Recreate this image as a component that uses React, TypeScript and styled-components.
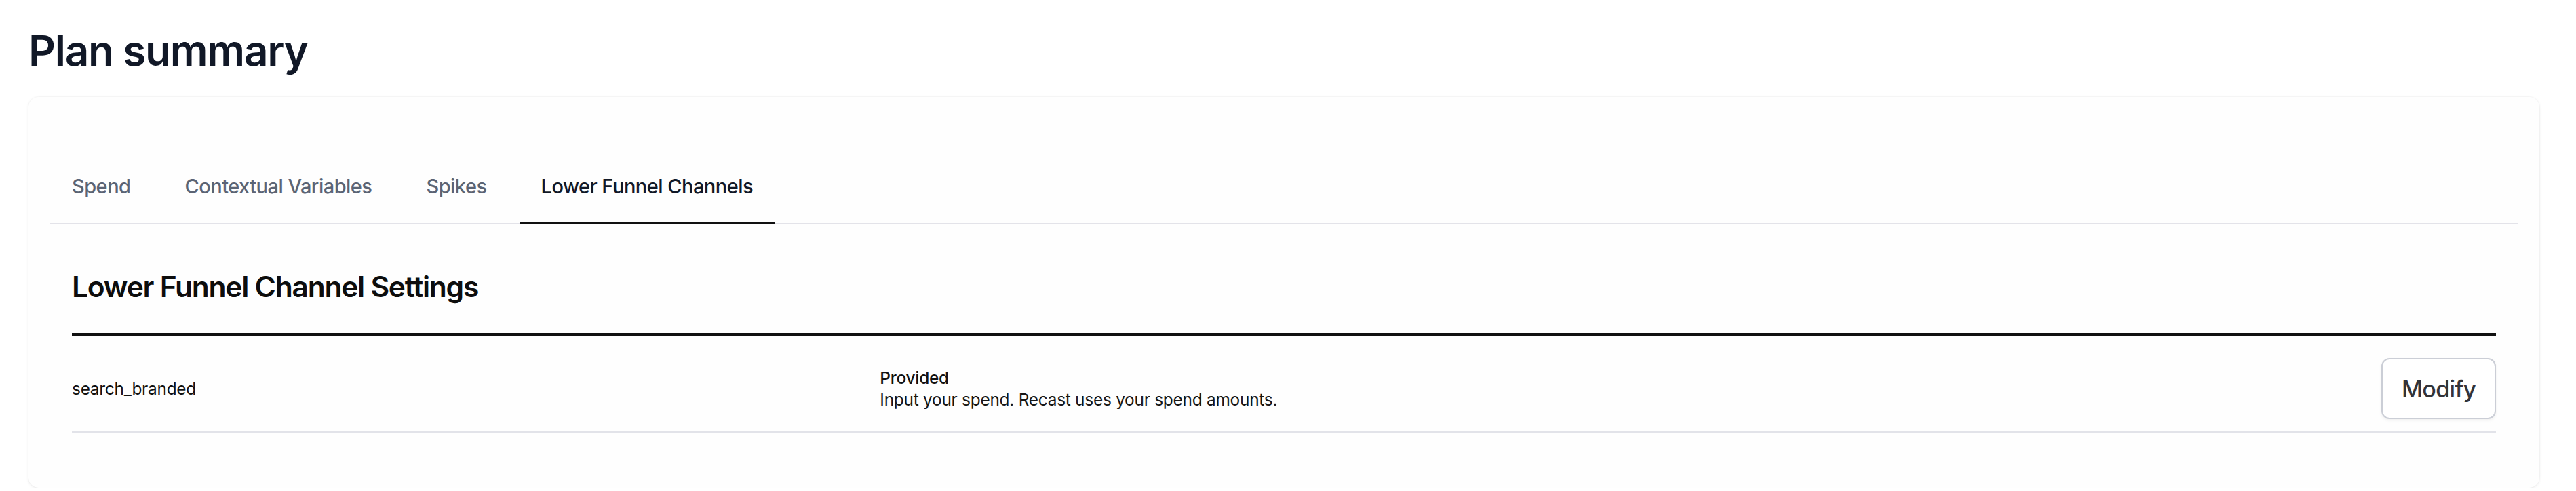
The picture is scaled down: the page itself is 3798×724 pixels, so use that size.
import React from "react";
import styled, { createGlobalStyle } from "styled-components";

const Global = createGlobalStyle`
  html, body { margin: 0; padding: 0; background: #ffffff; }
  body {
    font-family: Inter, "Noto Sans", "Liberation Sans", sans-serif;
    letter-spacing: -0.02em;
    -webkit-font-smoothing: antialiased;
  }
  * { box-sizing: border-box; }
`;

const Page = styled.main`
  padding: 36px 54px 0 42px;
`;

const Title = styled.h1`
  margin: 0 0 29px;
  font-size: 62px;
  line-height: 78px;
  font-weight: 600;
  letter-spacing: -0.02em;
  color: #111827;
`;

const Card = styled.section`
  background: #fefefe;
  border-radius: 15px;
  box-shadow: 0 0 0 1px rgba(0, 0, 0, 0.02), 0 1px 4px rgba(0, 0, 0, 0.08);
  padding: 80px 32px 80px;
`;

const TabList = styled.div`
  display: flex;
  gap: 16px;
  border-bottom: 2px solid #e3e3e9;
`;

const Tab = styled.button<{ $active?: boolean }>`
  appearance: none;
  background: none;
  border: 0;
  margin: 0 0 -2px;
  padding: 30px 32px;
  border-bottom: 4px solid ${(p) => (p.$active ? "#111111" : "transparent")};
  font-family: inherit;
  font-size: 29px;
  line-height: 44px;
  font-weight: 500;
  letter-spacing: -0.018em;
  color: ${(p) => (p.$active ? "#111827" : "#5b6474")};
  cursor: pointer;
`;

const Panel = styled.div`
  padding: 60px 32px 0;
`;

const SectionTitle = styled.h2`
  margin: 0 0 36px;
  font-size: 42.6px;
  line-height: 64px;
  font-weight: 600;
  letter-spacing: -0.03em;
  color: #0d0d0d;
`;

const Table = styled.div`
  border-top: 4px solid #111111;
`;

const Row = styled.div`
  display: grid;
  grid-template-columns: repeat(3, 1fr);
  align-items: center;
  padding: 33px 0 17px;
  border-bottom: 4px solid #e2e3e9;
`;

const Cell = styled.div<{ $end?: boolean }>`
  display: flex;
  flex-direction: column;
  align-items: ${(p) => (p.$end ? "flex-end" : "flex-start")};
  font-size: 24.4px;
  line-height: 32.5px;
  letter-spacing: -0.01em;
  color: #111111;
`;

const Label = styled.span`
  font-weight: 500;
`;

const Desc = styled.span`
  font-weight: 400;
  color: #161616;
`;

const Button = styled.button`
  height: 90px;
  padding: 0 27.5px;
  border: 2px solid #cbced6;
  border-radius: 12px;
  background: #ffffff;
  box-shadow: 0 2px 4px rgba(0, 0, 0, 0.06);
  font-family: inherit;
  font-size: 34px;
  font-weight: 500;
  letter-spacing: -0.02em;
  color: #333338;
  cursor: pointer;
`;

const tabs = ["Spend", "Contextual Variables", "Spikes", "Lower Funnel Channels"];

export default function App() {
  return (
    <>
      <Global />
      <Page>
        <Title>Plan summary</Title>
        <Card>
          <TabList>
            {tabs.map((t) => (
              <Tab key={t} $active={t === "Lower Funnel Channels"}>
                {t}
              </Tab>
            ))}
          </TabList>
          <Panel>
            <SectionTitle>Lower Funnel Channel Settings</SectionTitle>
            <Table>
              <Row>
                <Cell>search_branded</Cell>
                <Cell>
                  <Label>Provided</Label>
                  <Desc>Input your spend. Recast uses your spend amounts.</Desc>
                </Cell>
                <Cell $end>
                  <Button>Modify</Button>
                </Cell>
              </Row>
            </Table>
          </Panel>
        </Card>
      </Page>
    </>
  );
}
